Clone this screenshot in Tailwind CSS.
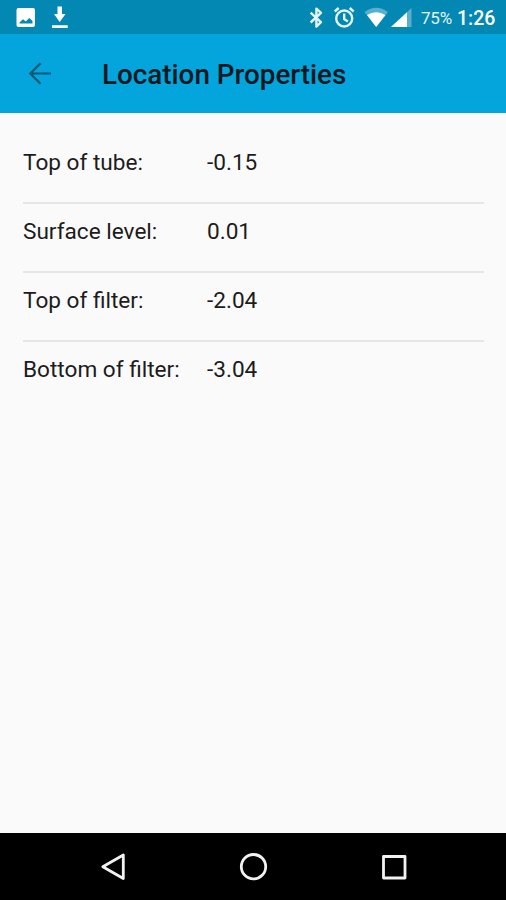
<!DOCTYPE html>
<html lang="en">
<head>
<meta charset="utf-8">
<title>Location Properties</title>
<script src="https://cdn.jsdelivr.net/npm/@tailwindcss/browser@4"></script>
</head>
<body class="bg-[#fafafa]">
<div class="flex h-[900px] w-[506px] flex-col overflow-hidden bg-[#fafafa] font-['Roboto',sans-serif] text-[#1c1c1c]">
  <div class="flex h-[34px] shrink-0 items-center justify-between bg-[#0288b3] text-white">
    <svg class="h-[34px] w-[80px]" viewBox="0 0 80 34" fill="#fff">
      <path fill-rule="evenodd" d="M18.5 8h14.5a2 2 0 0 1 2 2v15a2 2 0 0 1-2 2H18.500a2 2 0 0 1-2-2V10a2 2 0 0 1 2-2zM19.500 23.500h13v-2.500l-3.200-3-3.500 3.500-2.800-2.300-3.500 3.300z"/>
      <path d="M57.500 6.500h4.500v7.500h3.500L59.700 22 54 14h3.500zM52 25.300h15.700v2.700H52z"/>
    </svg>
    <div class="flex h-full items-center">
      <svg class="h-[34px] w-[120px]" viewBox="300 0 120 34" fill="none">
        <path d="M310.600 12.600l10.400 9.600-4.600 4.400V8.600l4.600 4.300-10.400 9.600" stroke="#e3f3f8" stroke-width="2.400" stroke-linejoin="round"/>
        <g stroke="#e3f3f8" stroke-width="2.400">
          <circle cx="344.200" cy="18.500" r="8"/>
          <path d="M344.200 13.500v5.500l3.700 2.500M334.700 11.500l4-3.500M353.700 11.500l-4-3.500"/>
        </g>
        <path d="M364.500 12q11.800-8.500 23.500 0L376.200 27z" fill="#58b0cc"/>
        <path d="M367 15q9.200-5.500 18.500 0L376.200 27z" fill="#fff"/>
        <path d="M411.500 8v19H391z" fill="#58b0cc"/>
        <path d="M407 12.200V27h-16z" fill="#fff"/>
      </svg>
      <span class="w-[37px] pt-[3px] pl-[1px] text-[17px] leading-none tracking-[-0.2px] text-[#e3f3f8]">75%</span>
      <span class="w-[49px] pt-[3px] text-[19.500px] leading-none font-medium">1:26</span>
    </div>
  </div>
  <header class="flex h-[78.500px] shrink-0 items-center bg-[#04a5dc]">
    <svg class="ml-[28px] h-[24px] w-[26px]" viewBox="0 0 26 24" fill="none" stroke="#075671" stroke-width="2.200">
      <path d="M23 12.500H2.500M12.500 2.300L2.300 12.500l10.200 10.200"/>
    </svg>
    <h1 class="ml-[48px] pt-[4px] text-[27.800px] leading-none font-medium text-[#061820]">Location Properties</h1>
  </header>
  <main class="flex grow flex-col pr-[22px] pl-[23px] pt-[21.500px] text-[22.600px]">
    <div class="flex h-[70px] border-b-2 border-[#e6e6e6] pt-[14px] leading-[30px]"><span class="w-[184px]">Top of tube:</span><span>-0.15</span></div>
    <div class="flex h-[69px] border-b-2 border-[#e6e6e6] pt-[13px] leading-[30px]"><span class="w-[184px]">Surface level:</span><span>0.01</span></div>
    <div class="flex h-[69px] border-b-2 border-[#e6e6e6] pt-[13px] leading-[30px]"><span class="w-[184px]">Top of filter:</span><span>-2.04</span></div>
    <div class="flex h-[69px] pt-[13px] leading-[30px]"><span class="w-[184px]">Bottom of filter:</span><span>-3.04</span></div>
  </main>
  <nav class="h-[67px] shrink-0 bg-black">
    <svg class="h-[67px] w-[506px]" viewBox="0 833 506 67" fill="none" stroke="#f2f2f2" stroke-width="2.800" stroke-linejoin="round">
      <path d="M123.300 855v23.500L102.800 866.700z"/>
      <circle cx="253.500" cy="866.700" r="12.200"/>
      <path d="M383.500 856.500h21.500v21.500h-21.500z"/>
    </svg>
  </nav>
</div>
</body>
</html>
